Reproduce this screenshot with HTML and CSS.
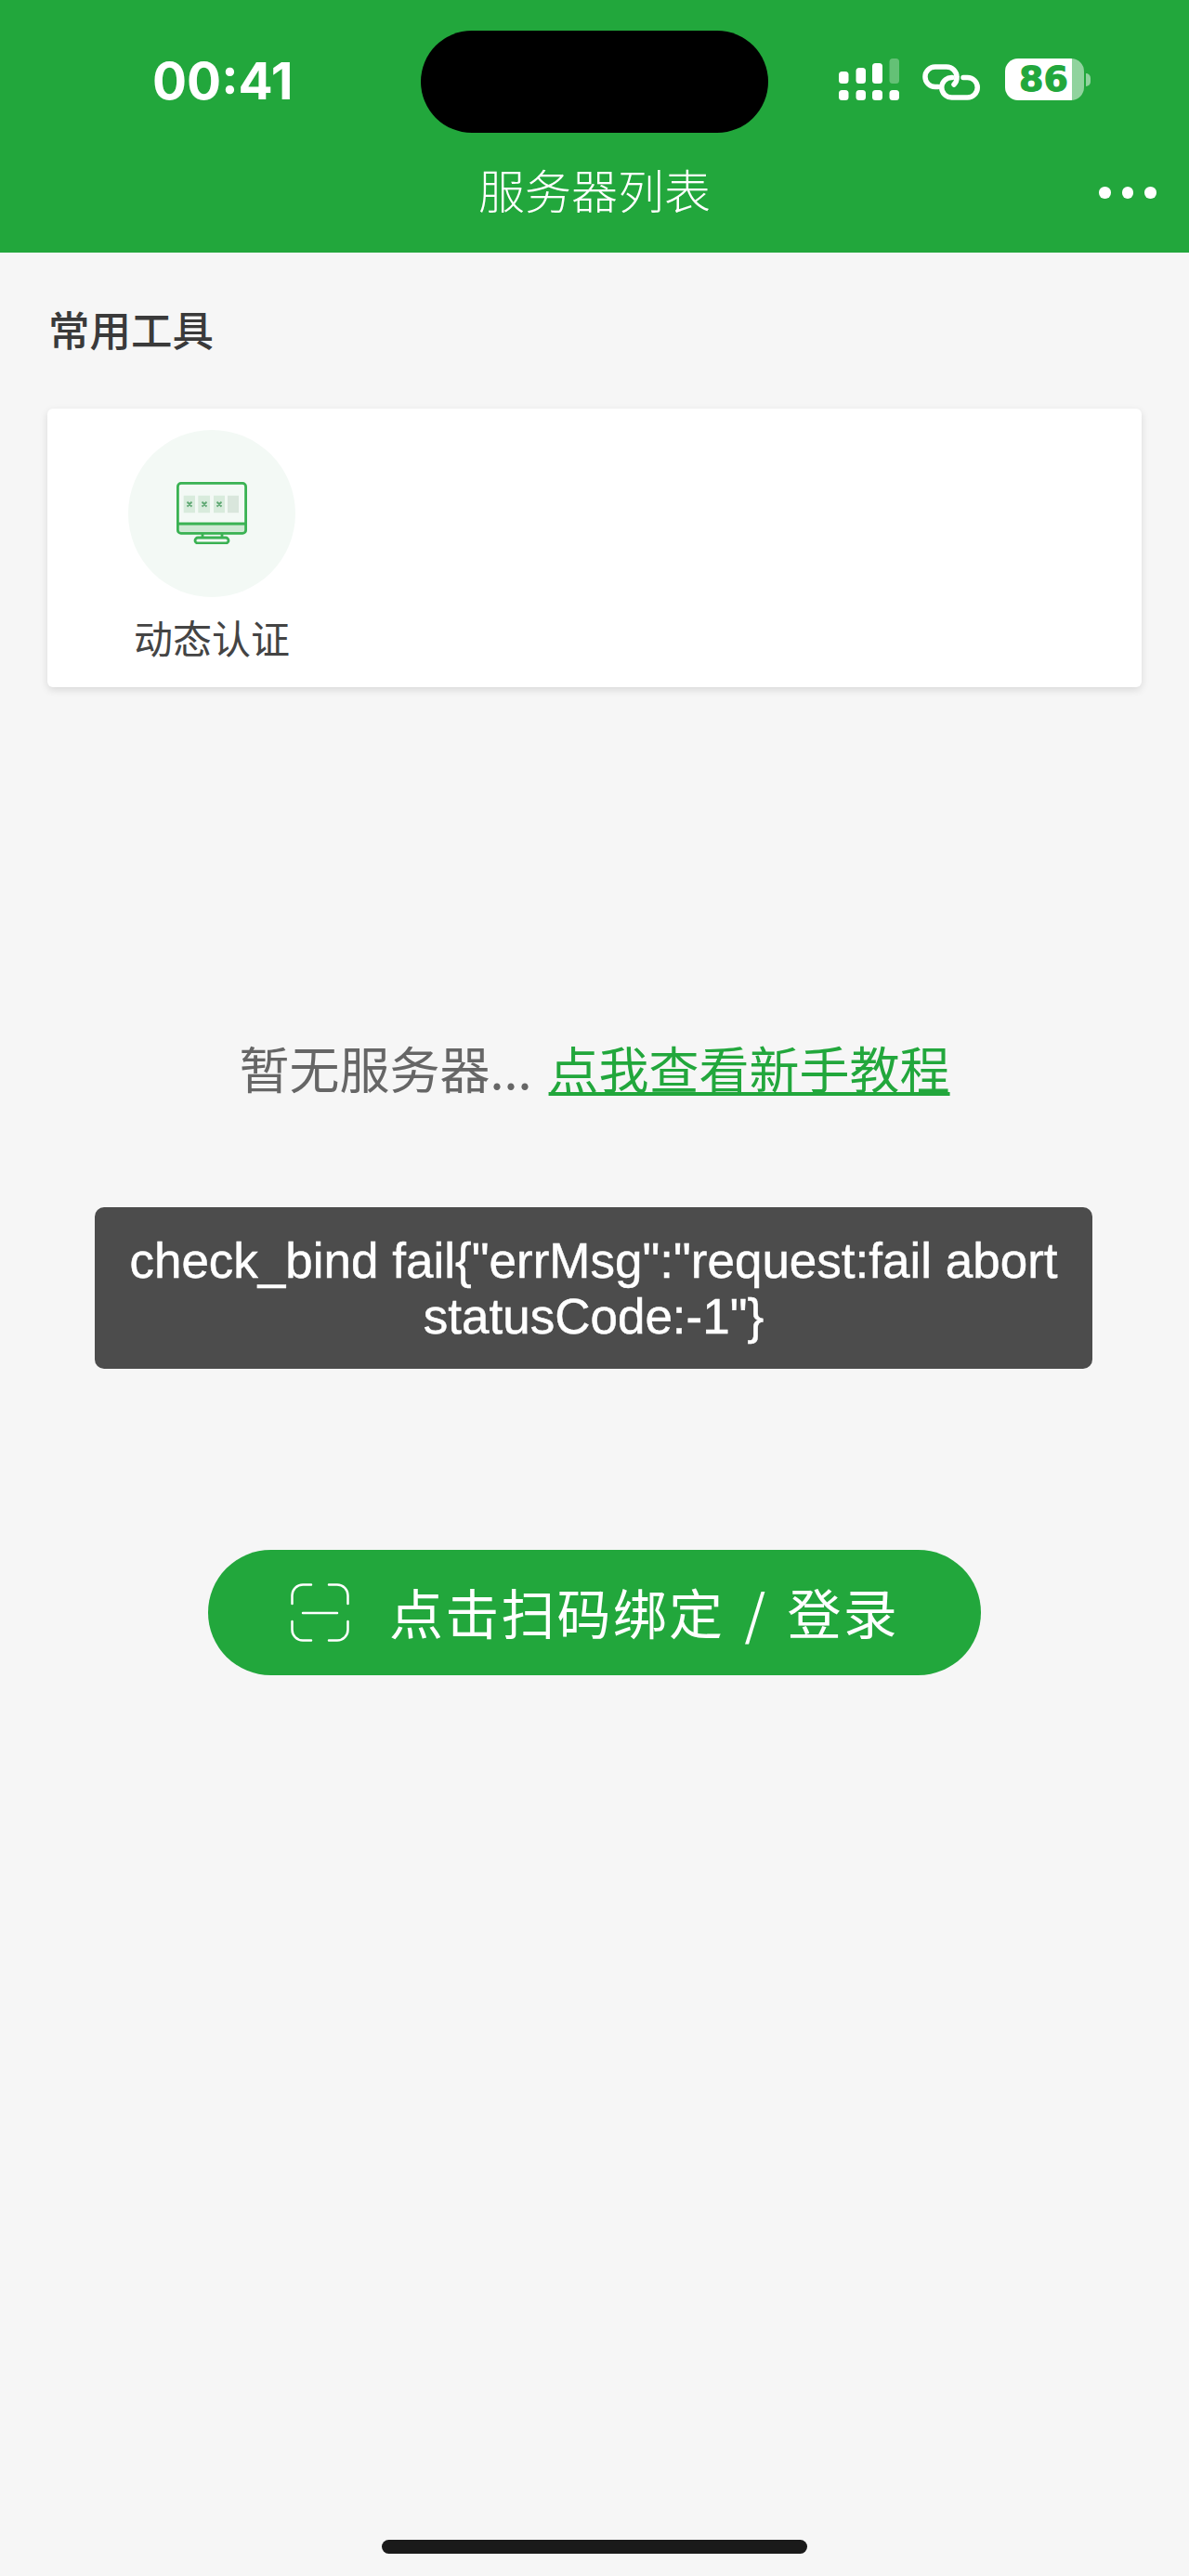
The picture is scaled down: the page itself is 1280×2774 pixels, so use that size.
FILE: index.html
```html
<!DOCTYPE html>
<html lang="zh-CN">
<head>
<meta charset="utf-8">
<title>服务器列表</title>
<link rel="stylesheet" href="styles.css">
</head>
<body>
<div class="page">
  <header class="header">
    <div class="status">
      <span class="time">00:41</span>
      <div class="island"></div>
      <svg class="signal" viewBox="0 0 65 45" aria-hidden="true">
        <rect class="w" x="0" y="14" width="10.500" height="13" rx="3.500"/>
        <rect class="w" x="18.500" y="10" width="10.500" height="17" rx="3.500"/>
        <rect class="w" x="36" y="5" width="11" height="22" rx="3.500"/>
        <rect class="dim" x="54.500" y="0" width="10.500" height="27" rx="3.500"/>
        <rect class="w" x="0" y="34" width="10.500" height="11" rx="3.500"/>
        <rect class="w" x="18.500" y="34" width="10.500" height="11" rx="3.500"/>
        <rect class="w" x="36" y="34" width="11" height="11" rx="3.500"/>
        <rect class="w" x="54.500" y="34" width="10.500" height="11" rx="3.500"/>
      </svg>
      <svg class="link" viewBox="0 0 62 39" aria-hidden="true">
        <path d="M17 24.500H13.700a10.700 10.700 0 0 1 0-21.500H26a11 11 0 0 1 11 11a10.500 10.500 0 0 1-3 8"/>
        <path d="M44 14.500H48.500a10.700 10.700 0 0 1 0 21.500H31.500a10.700 10.700 0 0 1 0-21.500H32"/>
      </svg>
      <div class="battery">
        <div class="cell"><span class="level">86</span></div>
        <div class="nub"></div>
      </div>
    </div>
    <div class="nav">
      <h1 class="title">服务器列表</h1>
      <div class="dots"><i></i><i></i><i></i></div>
    </div>
  </header>

  <main class="main">
    <h2 class="section">常用工具</h2>
    <section class="card">
      <div class="tool">
        <div class="tool-circle">
          <svg class="monitor" viewBox="0 0 76 67" aria-hidden="true">
            <rect class="m-band" x="1" y="45" width="74" height="10"/>
            <rect class="m-cell" x="7.700" y="14.700" width="12.300" height="18.500"/>
            <rect class="m-cell" x="23.300" y="14.700" width="12.700" height="18.500"/>
            <rect class="m-cell" x="40" y="14.700" width="12" height="18.500"/>
            <rect class="m-cell-off" x="55" y="14.700" width="12" height="18.500"/>
            <path class="m-x" d="M11.500 21.500l5 5m0-5l-5 5M27.500 21.500l5 5m0-5l-5 5M43.500 21.500l5 5m0-5l-5 5"/>
            <rect class="m-line" x="1.400" y="1.400" width="73.200" height="54" rx="3.500"/>
            <path class="m-line" d="M1.400 45H74.600M28 55v5M49 55v5"/>
            <rect class="m-line" x="20" y="60" width="36" height="6" rx="3"/>
          </svg>
        </div>
        <span class="tool-name">动态认证</span>
      </div>
    </section>

    <p class="empty">暂无服务器... <a class="empty-link" href="#">点我查看新手教程</a></p>

    <div class="toast">check_bind fail{"errMsg":"request:fail abort statusCode:-1"}</div>

    <button class="scan" type="button">
      <svg class="scan-icon" viewBox="0 0 63 63" aria-hidden="true">
        <path d="M1.500 22V13A11.500 11.500 0 0 1 13 1.500H22M41 1.500H50A11.500 11.500 0 0 1 61.500 13V22M1.500 41V50A11.500 11.500 0 0 0 13 61.500H22M41 61.500H50A11.500 11.500 0 0 0 61.500 50V41M13 32H50"/>
      </svg>
      <span class="scan-text">点击扫码绑定 / 登录</span>
    </button>
  </main>

  <div class="home-row"><div class="home-bar"></div></div>
</div>
</body>
</html>
```
FILE: styles.css
```css
* { box-sizing: border-box; }
html, body { margin: 0; padding: 0; }
body {
  background: #f6f6f6;
  font-family: "Noto Sans CJK SC", "Liberation Sans", sans-serif;
}
.page {
  min-height: 2774px;
  display: flex;
  flex-direction: column;
}
.header {
  background: #22a73c;
  height: 272px;
  color: #fff;
}
.status {
  height: 143px;
  padding-top: 33px;
  padding-left: 164px;
  display: flex;
  align-items: flex-start;
}
.time {
  width: 155px;
  margin-top: 23px;
  font-family: Inter, "Liberation Sans", sans-serif;
  font-weight: 700;
  font-size: 55px;
  line-height: 62px;
}
.island {
  width: 374px;
  height: 110px;
  margin-left: 134px;
  border-radius: 55px;
  background: #000;
}
.signal {
  width: 65px;
  height: 45px;
  margin-top: 30px;
  margin-left: 76px;
}
.signal .w { fill: #fff; }
.signal .dim { fill: rgba(255,255,255,.3); }
.link {
  width: 62px;
  height: 39px;
  margin-top: 36px;
  margin-left: 25px;
  fill: none;
  stroke: #fff;
  stroke-width: 5.500;
  stroke-linecap: round;
}
.battery {
  margin-top: 30px;
  margin-left: 27px;
  display: flex;
  align-items: center;
  gap: 2px;
}
.cell {
  width: 85px;
  height: 45px;
  border-radius: 14px;
  background: linear-gradient(90deg, #fff 84.700%, rgba(255,255,255,.5) 84.700%);
  overflow: hidden;
}
.level {
  display: block;
  padding-left: 15px;
  font-family: "DejaVu Sans", sans-serif;
  font-weight: 700;
  font-size: 38px;
  line-height: 45px;
  color: #22a73c;
  -webkit-text-stroke: 1px #22a73c;
}
.nub {
  width: 5px;
  height: 14px;
  border-radius: 0 7px 7px 0;
  background: rgba(255,255,255,.5);
}
.nav {
  height: 129px;
  display: flex;
  align-items: flex-start;
  justify-content: center;
  position: relative;
}
.title {
  margin: 23px 0 0;
  font-weight: 300;
  font-size: 50px;
  line-height: 74px;
}
.dots {
  position: absolute;
  left: 1183px;
  top: 58px;
  display: flex;
  gap: 12px;
}
.dots i {
  width: 12.500px;
  height: 12.500px;
  border-radius: 50%;
  background: #fff;
}
.main {
  flex: 1;
  display: flex;
  flex-direction: column;
}
.section {
  margin: 50px 0 0 52px;
  font-weight: 500;
  font-size: 44.500px;
  line-height: 64px;
  color: #3a3a3a;
}
.card {
  margin: 54px 51px 0;
  height: 300px;
  background: #fff;
  border-radius: 6px;
  box-shadow: 0 3px 8px rgba(0,0,0,.12);
  padding: 23px 0 0 87px;
}
.tool {
  width: 180px;
  display: flex;
  flex-direction: column;
  align-items: center;
}
.tool-circle {
  width: 180px;
  height: 180px;
  border-radius: 50%;
  background: #f3f9f5;
  display: flex;
  align-items: flex-start;
  justify-content: center;
  padding-top: 56px;
}
.monitor { width: 76px; height: 67px; }
.m-band { fill: #cfe9d4; }
.m-cell { fill: #d8ebdc; }
.m-cell-off { fill: #d9e6dc; }
.m-x { fill: none; stroke: #5fa873; stroke-width: 1.800; }
.m-line { fill: none; stroke: #3ab253; stroke-width: 2.800; }
.tool-name {
  margin-top: 13px;
  font-size: 42px;
  line-height: 60px;
  color: #444;
  white-space: nowrap;
}
.empty {
  margin: 372px 0 0;
  text-align: center;
  font-size: 54px;
  line-height: 76px;
  color: #666;
  font-weight: 400;
}
.empty-link {
  margin-left: 6px;
  color: #22a73c;
  text-decoration: underline;
  text-decoration-thickness: 4px;
  text-underline-offset: 3px;
  text-decoration-skip-ink: none;
}
.toast {
  margin: 112px 104px 0 102px;
  height: 174px;
  padding: 28px 20px 0;
  background: #4c4c4c;
  border-radius: 10px;
  color: #fff;
  text-align: center;
  font-family: "Liberation Sans", sans-serif;
  font-size: 53px;
  line-height: 60px;
  -webkit-text-stroke: 0.500px #fff;
}
.scan {
  margin: 195px 0 0 224px;
  width: 832px;
  height: 135px;
  border: 0;
  border-radius: 68px;
  background: #22a73c;
  color: #fff;
  display: flex;
  align-items: center;
  padding: 0 0 0 89px;
  font-family: inherit;
}
.scan-icon {
  width: 63px;
  height: 63px;
  fill: none;
  stroke: #fff;
  stroke-width: 2.500;
  stroke-linecap: round;
  flex: none;
}
.scan-text {
  margin: -4px 0 0 43px;
  font-size: 58px;
  letter-spacing: 2.200px;
  word-spacing: 6px;
  line-height: 80px;
  font-weight: 400;
  white-space: nowrap;
}
.home-row {
  height: 39px;
  display: flex;
  justify-content: center;
}
.home-bar {
  width: 458px;
  height: 15px;
  border-radius: 8px;
  background: #1a1a1a;
}
```
